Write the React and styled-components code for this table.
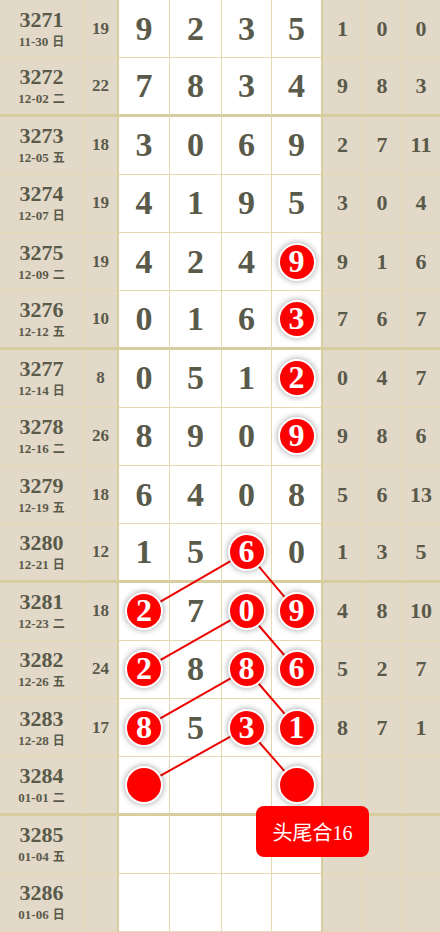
import styled, { createGlobalStyle } from 'styled-components';

const GlobalStyle = createGlobalStyle`
  html, body {
    margin: 0;
    padding: 0;
    background: #ffffff;
  }
  body {
    width: 440px;
    height: 932px;
    overflow: hidden;
    font-family: "Liberation Serif", "Noto Sans CJK SC", serif;
  }
`;

const ROW_H = 58.25;

// width, tone and right border of each column
const COLS = [
  { w: 84, tone: 'beige', edge: 1 },
  { w: 35, tone: 'beige', edge: 2 },
  { w: 51, tone: 'white', edge: 1 },
  { w: 52, tone: 'white', edge: 1 },
  { w: 50, tone: 'white', edge: 1 },
  { w: 51, tone: 'white', edge: 2 },
  { w: 40, tone: 'beige', edge: 1 },
  { w: 39, tone: 'beige', edge: 1 },
  { w: 38, tone: 'beige', edge: 0 },
];

const COL_LEFT = COLS.reduce((acc, c, i) => {
  acc.push(i === 0 ? 0 : acc[i - 1] + COLS[i - 1].w);
  return acc;
}, []);

// digits marked with * are drawn as red balls, '@' is an empty ball
const DRAWS = [
  { no: 3271, date: '11-30', day: '日', sum: 19, main: ['9', '2', '3', '5'], tail: [1, 0, 0] },
  { no: 3272, date: '12-02', day: '二', sum: 22, main: ['7', '8', '3', '4'], tail: [9, 8, 3] },
  { no: 3273, date: '12-05', day: '五', sum: 18, main: ['3', '0', '6', '9'], tail: [2, 7, 11] },
  { no: 3274, date: '12-07', day: '日', sum: 19, main: ['4', '1', '9', '5'], tail: [3, 0, 4] },
  { no: 3275, date: '12-09', day: '二', sum: 19, main: ['4', '2', '4', '*9'], tail: [9, 1, 6] },
  { no: 3276, date: '12-12', day: '五', sum: 10, main: ['0', '1', '6', '*3'], tail: [7, 6, 7] },
  { no: 3277, date: '12-14', day: '日', sum: 8, main: ['0', '5', '1', '*2'], tail: [0, 4, 7] },
  { no: 3278, date: '12-16', day: '二', sum: 26, main: ['8', '9', '0', '*9'], tail: [9, 8, 6] },
  { no: 3279, date: '12-19', day: '五', sum: 18, main: ['6', '4', '0', '8'], tail: [5, 6, 13] },
  { no: 3280, date: '12-21', day: '日', sum: 12, main: ['1', '5', '*6', '0'], tail: [1, 3, 5] },
  { no: 3281, date: '12-23', day: '二', sum: 18, main: ['*2', '7', '*0', '*9'], tail: [4, 8, 10] },
  { no: 3282, date: '12-26', day: '五', sum: 24, main: ['*2', '8', '*8', '*6'], tail: [5, 2, 7] },
  { no: 3283, date: '12-28', day: '日', sum: 17, main: ['*8', '5', '*3', '*1'], tail: [8, 7, 1] },
  { no: 3284, date: '01-01', day: '二', sum: '', main: ['@', '', '', '@'], tail: ['', '', ''] },
  { no: 3285, date: '01-04', day: '五', sum: '', main: ['', '', '', ''], tail: ['', '', ''] },
  { no: 3286, date: '01-06', day: '日', sum: '', main: ['', '', '', ''], tail: ['', '', ''] },
];

// links between balls: [row, col] -> [row, col]
const LINKS = [
  [[9, 4], [10, 2]], [[9, 4], [10, 5]],
  [[10, 4], [11, 2]], [[10, 4], [11, 5]],
  [[11, 4], [12, 2]], [[11, 4], [12, 5]],
  [[12, 4], [13, 2]], [[12, 4], [13, 5]],
];

const isThick = (no) => no % 4 === 0;

const center = (row, col) => {
  const bottom = isThick(DRAWS[row].no) ? 3 : 1;
  return {
    x: COL_LEFT[col] + (COLS[col].w - COLS[col].edge) / 2,
    y: row * ROW_H + (ROW_H - bottom) / 2,
  };
};

const Board = styled.div`
  position: relative;
  width: 440px;
  color: #5a5a4b;
`;

const Row = styled.div`
  display: grid;
  grid-template-columns: ${COLS.map((c) => `${c.w}px`).join(' ')};
  height: ${ROW_H}px;
`;

const Cell = styled.div`
  box-sizing: border-box;
  display: flex;
  align-items: center;
  justify-content: center;
  background: ${(p) => (p.$tone === 'white' ? '#ffffff' : '#e2d9c8')};
  border-right: ${(p) => p.$edge}px solid ${(p) => (p.$edge > 1 ? '#d8cd9f' : '#e3d9b3')};
  border-bottom: ${(p) => (p.$thick ? '3px solid #d8cd9f' : '1px solid #e3d9b3')};
  font-weight: bold;
`;

const IssueCell = styled(Cell)`
  flex-direction: column;
  gap: 2px;
`;

const IssueNo = styled.div`
  font-size: 22px;
  line-height: 22px;
`;

const IssueDate = styled.div`
  font-size: 13px;
  line-height: 15px;
  span {
    margin-left: 4px;
    font-family: "Noto Sans CJK SC", sans-serif;
    font-size: 12px;
  }
`;

const Sum = styled.span`
  font-size: 17px;
`;

const Digit = styled.span`
  font-size: 34px;
`;

const Tail = styled.span`
  font-size: 22px;
`;

const Ball = styled.div`
  position: relative;
  z-index: 2;
  box-sizing: border-box;
  width: 38px;
  height: 38px;
  border-radius: 50%;
  border: 2px solid #ffffff;
  background: #ff0000;
  box-shadow: 0 0 6px rgba(0, 0, 0, 0.4);
  color: #ffffff;
  font-size: 32px;
  line-height: 33px;
  text-align: center;
`;

const Links = styled.svg`
  position: absolute;
  left: 0;
  top: 0;
  z-index: 1;
  pointer-events: none;
`;

const Badge = styled.div`
  position: absolute;
  left: 256px;
  top: 806px;
  z-index: 3;
  width: 113px;
  height: 51px;
  border-radius: 8px;
  background: #ff0000;
  color: #ffffff;
  display: flex;
  align-items: center;
  justify-content: center;
  font-family: "Liberation Serif", "Noto Sans CJK SC", serif;
  font-size: 20px;
`;

const MainCell = ({ value, col, thick }) => {
  const c = COLS[col];
  let inner = null;
  if (value === '@') inner = <Ball />;
  else if (value.startsWith('*')) inner = <Ball>{value.slice(1)}</Ball>;
  else if (value) inner = <Digit>{value}</Digit>;
  return (
    <Cell $tone={c.tone} $edge={c.edge} $thick={thick}>
      {inner}
    </Cell>
  );
};

const DrawRow = ({ draw }) => {
  const thick = isThick(draw.no);
  return (
    <Row>
      <IssueCell $tone="beige" $edge={COLS[0].edge} $thick={thick}>
        <IssueNo>{draw.no}</IssueNo>
        <IssueDate>
          {draw.date}
          <span>{draw.day}</span>
        </IssueDate>
      </IssueCell>
      <Cell $tone="beige" $edge={COLS[1].edge} $thick={thick}>
        <Sum>{draw.sum}</Sum>
      </Cell>
      {draw.main.map((v, i) => (
        <MainCell key={i} value={v} col={i + 2} thick={thick} />
      ))}
      {draw.tail.map((v, i) => (
        <Cell key={i} $tone="beige" $edge={COLS[i + 6].edge} $thick={thick}>
          <Tail>{v}</Tail>
        </Cell>
      ))}
    </Row>
  );
};

const App = () => {
  return (
    <>
      <GlobalStyle />
      <Board>
        {DRAWS.map((d) => (
          <DrawRow key={d.no} draw={d} />
        ))}
        <Links width="440" height="932" viewBox="0 0 440 932">
          {LINKS.map(([a, b], i) => {
            const p = center(a[0], a[1]);
            const q = center(b[0], b[1]);
            return <line key={i} x1={p.x} y1={p.y} x2={q.x} y2={q.y} stroke="#ee0000" strokeWidth="2" />;
          })}
        </Links>
        <Badge>头尾合16</Badge>
      </Board>
    </>
  );
};

export default App;
